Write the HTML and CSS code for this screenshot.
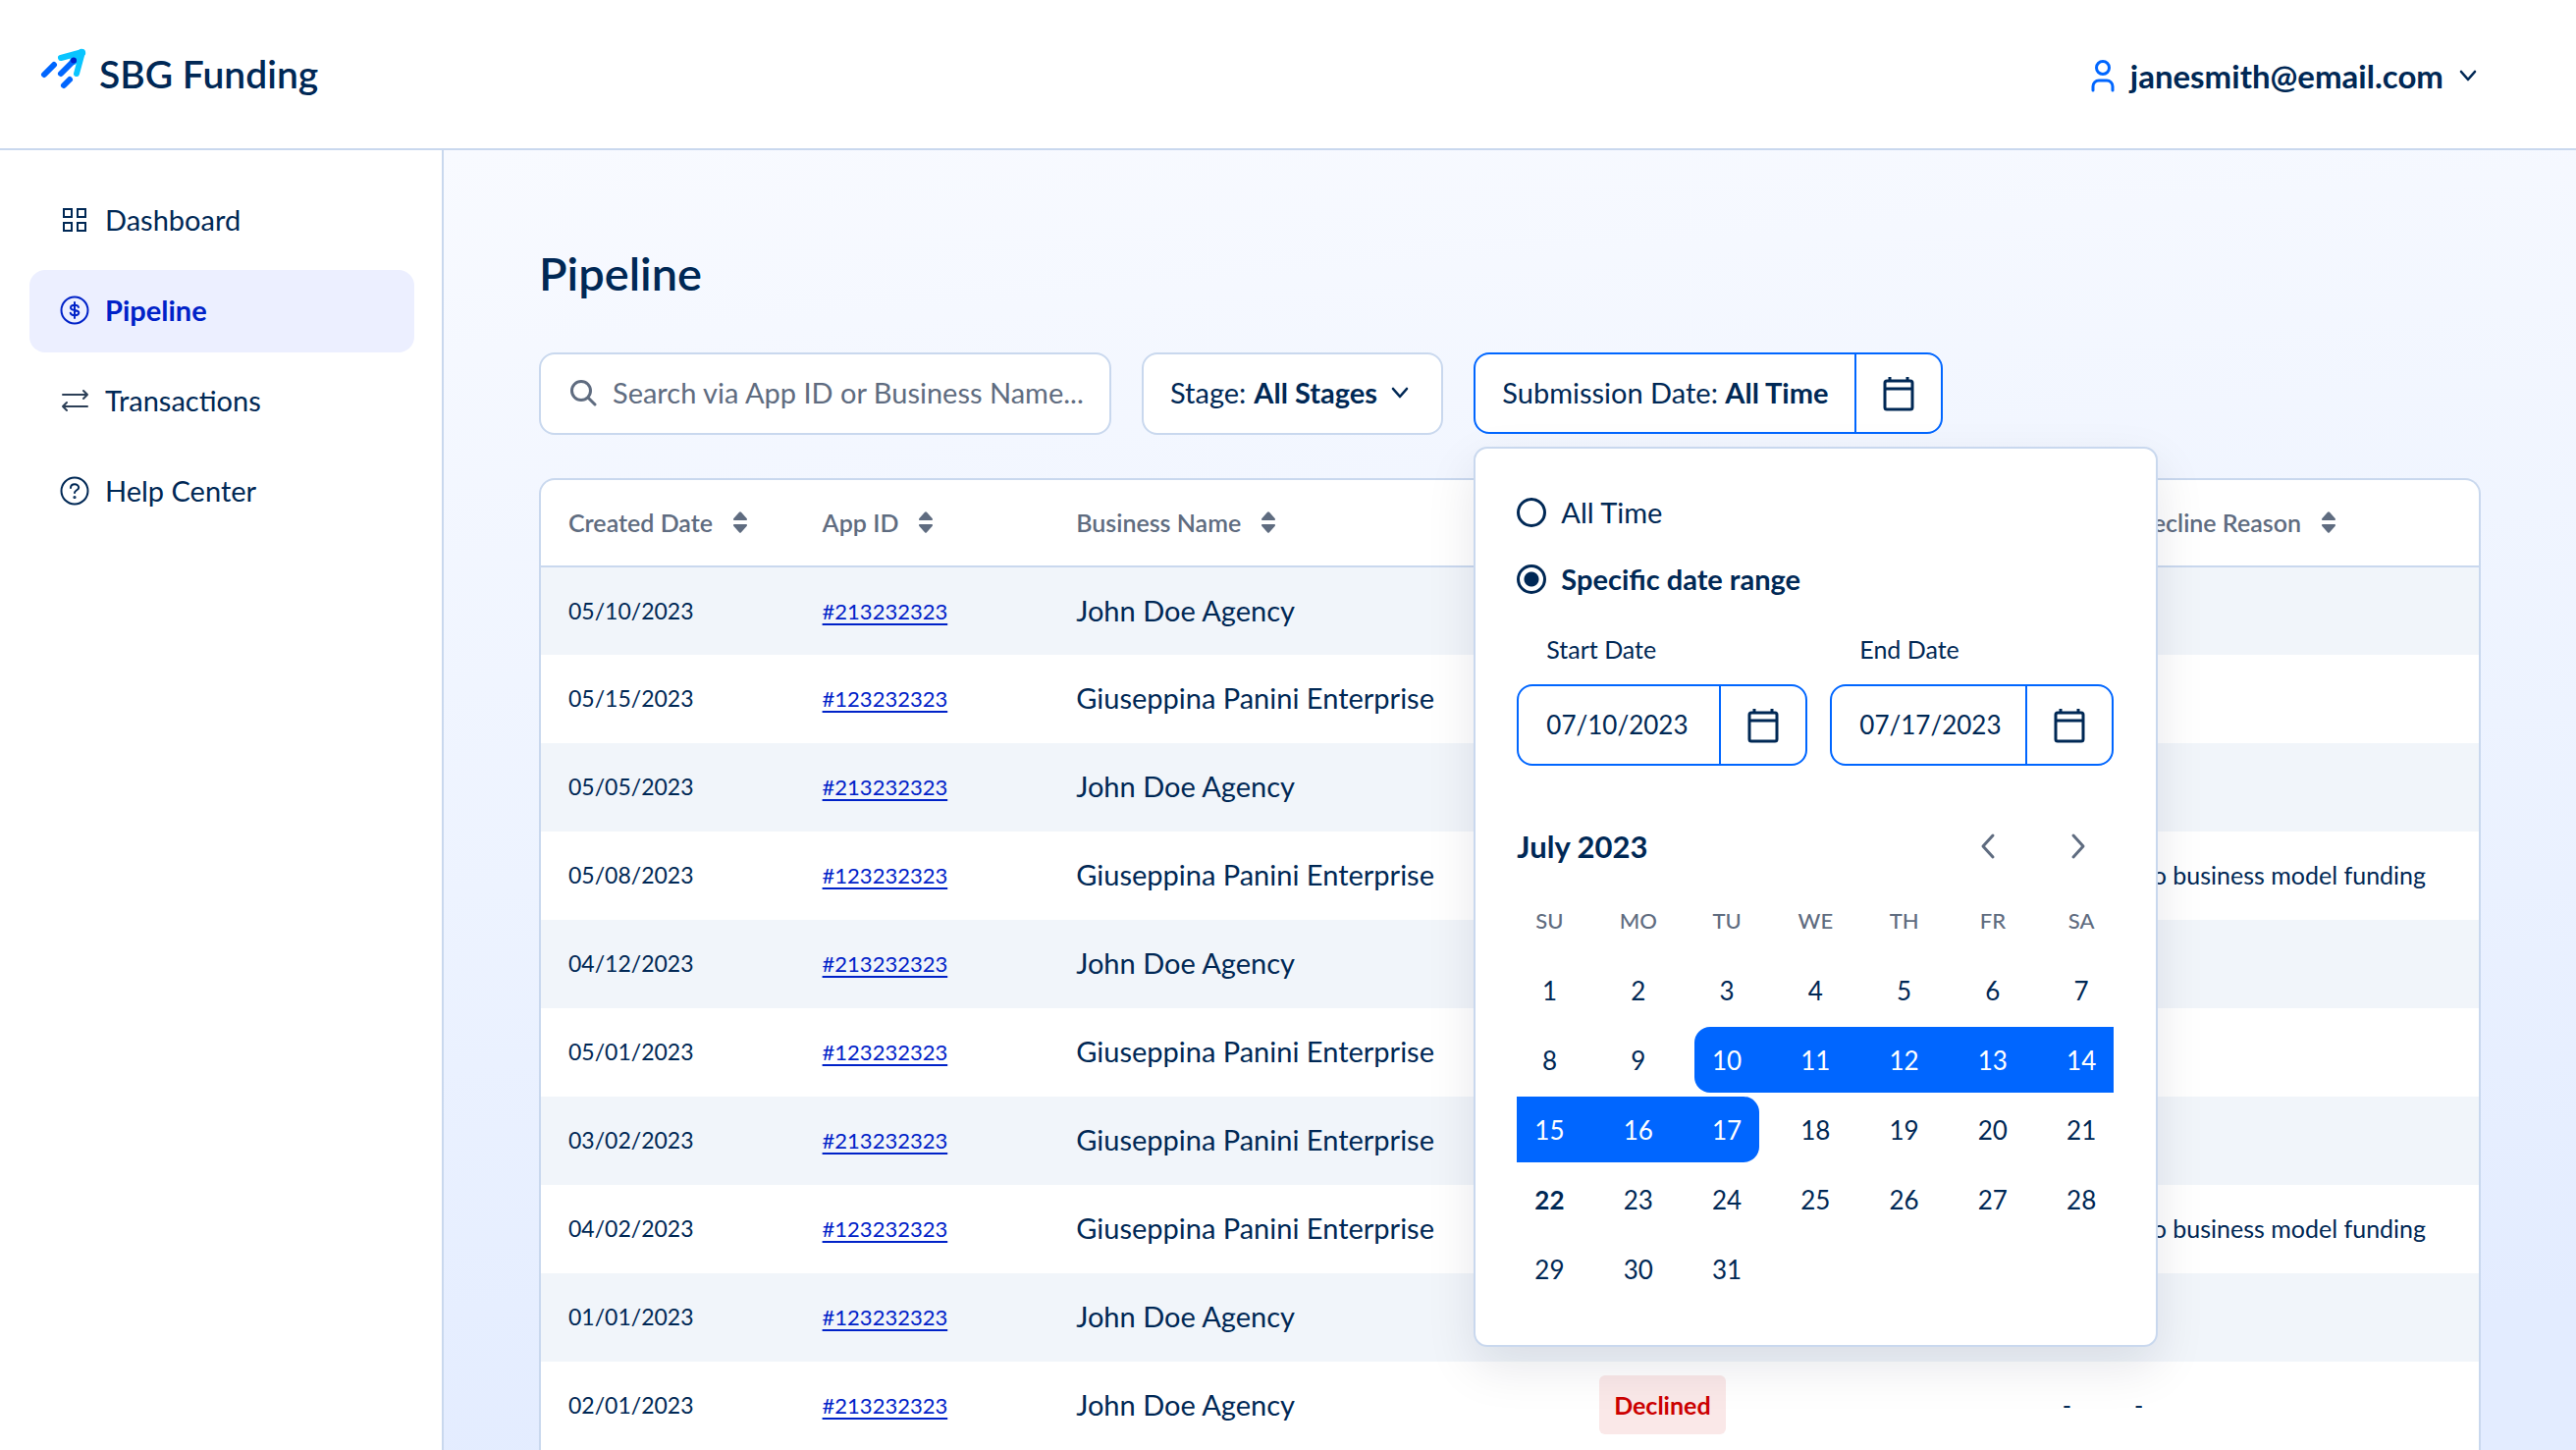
FILE: index.html
```html
<!DOCTYPE html>
<html lang="en">
<head>
  <meta charset="UTF-8">
  <meta name="viewport" content="width=device-width, initial-scale=1.0">
  <title>Pipeline - SBG Funding</title>
  <link rel="stylesheet" href="styles.css">
</head>
<body>

  <!-- Shared icons -->
  <svg class="sprite" aria-hidden="true">
    <symbol id="icon-chevron" viewBox="0 0 18 12">
      <path d="M2 2l7 8 7-8" fill="none" stroke="currentColor" stroke-width="2.600" stroke-linecap="round" stroke-linejoin="round"/>
    </symbol>
    <symbol id="icon-calendar" viewBox="0 0 32 36">
      <path d="M4 5h24a2 2 0 0 1 2 2v25a2 2 0 0 1-2 2H4a2 2 0 0 1-2-2V7a2 2 0 0 1 2-2zM7 1v4M25 1v4M2 13h28" fill="none" stroke="currentColor" stroke-width="3"/>
    </symbol>
    <symbol id="icon-sort" viewBox="0 0 14 22">
      <path d="M6 .7a1.4 1.4 0 0 1 2 0l5.600 6.300c.8 1 .3 2-.8 2H1.200C.1 9-.4 8 .4 7zM6 21.300a1.400 1.400 0 0 0 2 0l5.600-6.300c.8-1 .3-2-.8-2H1.200c-1.100 0-1.600 1-.8 2z" fill="currentColor"/>
    </symbol>
  </svg>

  <div class="app">
    <header class="header">
      <a href="#" class="brand">
        <svg class="brand-logo" width="48" height="44" viewBox="0 0 48 44" fill="none" stroke-linecap="round" stroke-linejoin="round" aria-hidden="true">
          <path d="M21 11l22-6-6 22" stroke="#0ac5ff" stroke-width="6"/>
          <path d="M42 6L34 14" stroke="#0ac5ff" stroke-width="8"/>
          <path d="M21 27L34 14" stroke="#0066ff" stroke-width="6"/>
          <path d="M4 28L14 18" stroke="#0066ff" stroke-width="6"/>
          <path d="M24 39l6-6" stroke="#0066ff" stroke-width="6"/>
          <circle cx="34" cy="13.500" r="3" fill="#0022c8"/>
        </svg>
        <span>SBG Funding</span>
      </a>
      <button type="button" class="user-menu">
        <svg width="24" height="34" viewBox="0 0 24 34" fill="none" stroke="#0066ff" stroke-width="3" stroke-linecap="round" aria-hidden="true">
          <circle cx="12" cy="9" r="6.500"/>
          <path d="M2 32v-4a6 6 0 0 1 6-6h8a6 6 0 0 1 6 6v4"/>
        </svg>
        <span>janesmith@email.com</span>
        <svg class="chevron" aria-hidden="true"><use href="#icon-chevron"/></svg>
      </button>
    </header>

    <nav class="sidebar">
      <a href="#" class="nav-item">
        <svg width="30" height="30" viewBox="0 0 30 30" fill="none" stroke="currentColor" stroke-width="2" aria-hidden="true">
          <path d="M4 4h8v8H4zM18 4h8v8h-8zM4 18h8v8H4zM18 18h8v8h-8z"/>
        </svg>
        <span>Dashboard</span>
      </a>
      <a href="#" class="nav-item active">
        <svg width="30" height="30" viewBox="0 0 30 30" fill="none" stroke="currentColor" stroke-width="2" stroke-linecap="round" aria-hidden="true">
          <circle cx="15" cy="15" r="13.500"/>
          <path d="M15 7v16M19 12c-.4-1.500-2-2.200-4-2.200-2.400 0-4 .9-4 2.600 0 3.600 8.300 1.600 8.300 5.200 0 1.800-1.900 2.700-4.300 2.700-2.200 0-4-.9-4.300-2.600"/>
        </svg>
        <span>Pipeline</span>
      </a>
      <a href="#" class="nav-item">
        <svg class="icon-soft" width="30" height="30" viewBox="0 0 30 30" fill="none" stroke="currentColor" stroke-width="2" stroke-linecap="round" stroke-linejoin="round" aria-hidden="true">
          <path d="M3 9h25M24 5l4 4-4 4M28 21H3M7 17l-4 4 4 4"/>
        </svg>
        <span>Transactions</span>
      </a>
      <a href="#" class="nav-item">
        <svg width="30" height="30" viewBox="0 0 30 30" fill="none" stroke="currentColor" stroke-width="2" stroke-linecap="round" aria-hidden="true">
          <circle cx="15" cy="15" r="13.500"/>
          <path d="M11 12c0-2.300 1.700-3.800 4-3.800s4.200 1.400 4.200 3.500c0 2.600-4.200 2.500-4.200 5.300"/>
          <circle cx="15" cy="21.500" r=".6" fill="currentColor"/>
        </svg>
        <span>Help Center</span>
      </a>
    </nav>

    <main class="main">
      <h1>Pipeline</h1>

      <div class="filters">
        <label class="search">
          <svg width="28" height="28" viewBox="0 0 28 28" fill="none" stroke="currentColor" stroke-width="3" stroke-linecap="round" aria-hidden="true">
            <circle cx="12" cy="12" r="9.500"/>
            <path d="M19 19l7 7"/>
          </svg>
          <input type="text" aria-label="Search" placeholder="Search via App ID or Business Name...">
        </label>

        <div class="stage">
          <label for="stage">Stage:</label>
          <select id="stage">
            <option>All Stages</option>
          </select>
          <svg class="chevron" aria-hidden="true"><use href="#icon-chevron"/></svg>
        </div>

        <div class="date-filter">
          <div class="split">
            <button type="button" class="split-text">Submission Date: <b>All Time</b></button>
            <button type="button" class="split-icon" aria-label="Open calendar"><svg class="calendar" aria-hidden="true"><use href="#icon-calendar"/></svg></button>
          </div>

          <div class="popup">
            <div class="radios">
              <label><input type="radio" name="range"> All Time</label>
              <label><input type="radio" name="range" checked> Specific date range</label>
            </div>

            <div class="dates">
              <div class="date-field">
                <label for="start-date">Start Date</label>
                <div class="split">
                  <input type="text" id="start-date" value="07/10/2023">
                  <button type="button" class="split-icon" aria-label="Pick start date"><svg class="calendar" aria-hidden="true"><use href="#icon-calendar"/></svg></button>
                </div>
              </div>
              <div class="date-field">
                <label for="end-date">End Date</label>
                <div class="split">
                  <input type="text" id="end-date" value="07/17/2023">
                  <button type="button" class="split-icon" aria-label="Pick end date"><svg class="calendar" aria-hidden="true"><use href="#icon-calendar"/></svg></button>
                </div>
              </div>
            </div>

            <div class="month">
              <h2>July 2023</h2>
              <button type="button" aria-label="Previous month">
                <svg width="18" height="30" viewBox="0 0 18 30" fill="none" stroke="currentColor" stroke-width="3" stroke-linecap="round" stroke-linejoin="round"><path d="M14 4L4 15l10 11"/></svg>
              </button>
              <button type="button" aria-label="Next month">
                <svg width="18" height="30" viewBox="0 0 18 30" fill="none" stroke="currentColor" stroke-width="3" stroke-linecap="round" stroke-linejoin="round"><path d="M4 4l10 11L4 26"/></svg>
              </button>
            </div>

            <div class="weekdays">
              <span>SU</span><span>MO</span><span>TU</span><span>WE</span><span>TH</span><span>FR</span><span>SA</span>
            </div>
            <div class="days">
              <button type="button">1</button>
              <button type="button">2</button>
              <button type="button">3</button>
              <button type="button">4</button>
              <button type="button">5</button>
              <button type="button">6</button>
              <button type="button">7</button>
              <button type="button">8</button>
              <button type="button">9</button>
              <button type="button" class="in-range range-start">10</button>
              <button type="button" class="in-range">11</button>
              <button type="button" class="in-range">12</button>
              <button type="button" class="in-range">13</button>
              <button type="button" class="in-range">14</button>
              <button type="button" class="in-range">15</button>
              <button type="button" class="in-range">16</button>
              <button type="button" class="in-range range-end">17</button>
              <button type="button">18</button>
              <button type="button">19</button>
              <button type="button">20</button>
              <button type="button">21</button>
              <button type="button" class="today">22</button>
              <button type="button">23</button>
              <button type="button">24</button>
              <button type="button">25</button>
              <button type="button">26</button>
              <button type="button">27</button>
              <button type="button">28</button>
              <button type="button">29</button>
              <button type="button">30</button>
              <button type="button">31</button>
            </div>
          </div>
        </div>
      </div>

      <div class="table-card">
        <table>
          <thead>
            <tr>
              <th class="col-date"><button type="button">Created Date <svg class="sort"><use href="#icon-sort"/></svg></button></th>
              <th class="col-id"><button type="button">App ID <svg class="sort"><use href="#icon-sort"/></svg></button></th>
              <th class="col-name"><button type="button">Business Name <svg class="sort"><use href="#icon-sort"/></svg></button></th>
              <th class="col-stage"></th>
              <th class="col-amount"></th>
              <th><button type="button">Decline Reason <svg class="sort"><use href="#icon-sort"/></svg></button></th>
            </tr>
          </thead>
          <tbody>
            <tr><td class="date">05/10/2023</td><td><a href="#">#213232323</a></td><td class="name">John Doe Agency</td><td></td><td></td><td></td></tr>
            <tr><td class="date">05/15/2023</td><td><a href="#">#123232323</a></td><td class="name">Giuseppina Panini Enterprise</td><td></td><td></td><td></td></tr>
            <tr><td class="date">05/05/2023</td><td><a href="#">#213232323</a></td><td class="name">John Doe Agency</td><td></td><td></td><td></td></tr>
            <tr><td class="date">05/08/2023</td><td><a href="#">#123232323</a></td><td class="name">Giuseppina Panini Enterprise</td><td></td><td></td><td>No business model funding</td></tr>
            <tr><td class="date">04/12/2023</td><td><a href="#">#213232323</a></td><td class="name">John Doe Agency</td><td></td><td></td><td></td></tr>
            <tr><td class="date">05/01/2023</td><td><a href="#">#123232323</a></td><td class="name">Giuseppina Panini Enterprise</td><td></td><td></td><td></td></tr>
            <tr><td class="date">03/02/2023</td><td><a href="#">#213232323</a></td><td class="name">Giuseppina Panini Enterprise</td><td></td><td></td><td></td></tr>
            <tr><td class="date">04/02/2023</td><td><a href="#">#123232323</a></td><td class="name">Giuseppina Panini Enterprise</td><td></td><td></td><td>No business model funding</td></tr>
            <tr><td class="date">01/01/2023</td><td><a href="#">#123232323</a></td><td class="name">John Doe Agency</td><td></td><td></td><td></td></tr>
            <tr><td class="date">02/01/2023</td><td><a href="#">#213232323</a></td><td class="name">John Doe Agency</td><td><span class="badge">Declined</span></td><td class="amount">-</td><td>-</td></tr>
          </tbody>
        </table>
      </div>
    </main>
  </div>

</body>
</html>
```
FILE: styles.css
```css
:root {
  --navy: #002855;
  --blue: #0066ff;
  --link: #0022c8;
  --gray: #5f6c80;
  --line: #c9d8ee;
}

* {
  margin: 0;
  padding: 0;
  box-sizing: border-box;
}

body {
  font-family: Lato, sans-serif;
  font-size: 29px;
  line-height: 36px;
  color: var(--navy);
  background-color: #fff;
}

button,
input,
select {
  font: inherit;
  color: inherit;
  background: none;
  border: none;
  outline: none;
}

button {
  cursor: pointer;
}

a {
  color: inherit;
  text-decoration: none;
}

svg {
  display: block;
  flex-shrink: 0;
}

.sprite {
  display: none;
}

.chevron {
  width: 18px;
  height: 12px;
}

.calendar {
  width: 32px;
  height: 36px;
}

/* Page shell */
.app {
  display: grid;
  grid-template-columns: 452px 1fr;
  grid-template-rows: auto 1fr;
  height: 100vh;
  overflow: hidden;
}

/* Header */
.header {
  grid-column: 1 / -1;
  display: flex;
  justify-content: space-between;
  align-items: center;
  height: 153px;
  padding: 0 101px 0 41px;
  border-bottom: 2px solid var(--line);
}

.brand {
  display: flex;
  align-items: center;
  gap: 12px;
  padding-bottom: 2px;
  font-size: 39px;
  font-weight: 600;
}

.brand-logo {
  margin-bottom: 10px;
}

.user-menu {
  display: flex;
  align-items: center;
  gap: 16px;
  padding-top: 2px;
  font-size: 33px;
  font-weight: 700;
}

/* Sidebar */
.sidebar {
  display: flex;
  flex-direction: column;
  gap: 8px;
  padding: 30px 28px 30px 30px;
  border-right: 2px solid var(--line);
}

.nav-item {
  display: flex;
  align-items: center;
  gap: 16px;
  padding: 23px 31px 25px;
  border-radius: 16px;
}

.nav-item.active {
  color: var(--link);
  font-weight: 700;
  background-color: #ecefff;
}

.icon-soft {
  color: #2c3f57;
}

/* Main */
.main {
  padding: 95px 97px 0;
  background: linear-gradient(175deg, #f8faff 0%, #edf3ff 50%, #e3ecff 90%);
}

h1 {
  font-size: 47px;
  line-height: 60px;
  font-weight: 600;
}

.filters {
  display: flex;
  gap: 31px;
  margin: 51px 0 44px;
}

.search,
.stage {
  display: flex;
  align-items: center;
  height: 84px;
  padding-bottom: 2px;
  background-color: #fff;
  border: 2px solid var(--line);
  border-radius: 16px;
}

.search {
  gap: 16px;
  width: 583px;
  padding-left: 29px;
  padding-right: 20px;
  color: var(--gray);
}

.search input {
  flex: 1;
  min-width: 0;
}

.search input::placeholder {
  color: var(--gray);
  opacity: 1;
}

.stage {
  gap: 8px;
  padding-left: 27px;
  padding-right: 33px;
}

.stage select {
  appearance: none;
  font-weight: 700;
}

.stage .chevron {
  margin-left: 6px;
}

.date-filter {
  position: relative;
}

.split {
  display: flex;
  height: 83px;
  background-color: #fff;
  border: 2px solid var(--blue);
  border-radius: 16px;
}

.split-text {
  padding: 0 27px 2px;
}

.split-text b {
  font-weight: 700;
}

.split-icon {
  display: flex;
  align-items: center;
  justify-content: center;
  width: 88px;
  border-left: 2px solid var(--blue);
}

/* Date popup */
.popup {
  position: absolute;
  top: 96px;
  left: 0;
  z-index: 1;
  width: 697px;
  padding: 47px 43px 44px 42px;
  background-color: #fff;
  border: 2px solid var(--line);
  border-radius: 14px;
  box-shadow: 0 20px 50px rgba(0, 20, 50, 0.1);
}

.radios {
  display: flex;
  flex-direction: column;
  gap: 32px;
}

.radios label {
  display: flex;
  align-items: center;
  gap: 15px;
}

.radios label:has(:checked) {
  font-weight: 700;
}

.radios input {
  appearance: none;
  width: 30px;
  height: 30px;
  border: 3px solid var(--navy);
  border-radius: 50%;
}

.radios input:checked {
  background: radial-gradient(circle, var(--navy) 7px, transparent 8px);
}

.dates {
  display: grid;
  grid-template-columns: 296px 1fr;
  gap: 23px;
  margin-top: 35px;
}

.date-field {
  display: flex;
  flex-direction: column;
  gap: 18px;
  min-width: 0;
}

.date-field label {
  padding-left: 30px;
  font-size: 25px;
}

.date-field input {
  flex: 1;
  min-width: 0;
  padding: 0 0 2px 28px;
  font-size: 26px;
}

.month {
  display: flex;
  align-items: center;
  gap: 32px;
  margin: 52px 6px 36px 0;
}

.month h2 {
  flex: 1;
  font-size: 31px;
  line-height: 60px;
  font-weight: 700;
}

.month button {
  display: flex;
  align-items: center;
  justify-content: center;
  width: 60px;
  height: 60px;
  color: var(--gray);
}

.weekdays,
.days {
  display: grid;
  grid-template-columns: repeat(7, 1fr);
  column-gap: 24px;
  text-align: center;
}

.weekdays {
  margin-bottom: 27px;
  font-size: 22px;
  line-height: 20px;
  font-weight: 500;
  color: var(--gray);
}

.days {
  row-gap: 4px;
  font-size: 26px;
}

.days button {
  height: 67px;
}

.today {
  font-weight: 700;
}

.days .in-range {
  color: #fff;
  background-color: var(--blue);
}

/* fill the gap up to the next day of the range */
.days .in-range:not(.range-end):not(:nth-child(7n)) {
  box-shadow: 24px 0 0 var(--blue);
}

.range-start {
  border-radius: 16px 0 0 16px;
}

.range-end {
  border-radius: 0 16px 16px 0;
}

/* Table */
.table-card {
  background-color: #fff;
  border: 2px solid var(--line);
  border-bottom: none;
  border-radius: 16px 16px 0 0;
}

table {
  width: 100%;
  table-layout: fixed;
  border-collapse: collapse;
}

th,
td {
  padding: 0 0 2px 28px;
  text-align: left;
  white-space: nowrap;
  font-size: 25px;
}

th {
  height: 88px;
  border-bottom: 2px solid var(--line);
  color: var(--gray);
}

th button {
  display: flex;
  align-items: center;
  gap: 21px;
  font-weight: 600;
}

td {
  height: 90px;
}

tbody tr:nth-child(odd) {
  background-color: #f1f5fa;
}

td a {
  font-size: 22px;
  color: var(--link);
  text-decoration: underline;
  text-underline-offset: 4px;
}

.date {
  font-size: 23px;
}

.name {
  font-size: 29px;
}

.col-date,
.col-id {
  width: 13.1%;
}

.col-name {
  width: 27%;
}

.col-stage {
  width: 14%;
}

.col-amount {
  width: 13.6%;
}

.amount {
  padding-right: 36px;
  text-align: right;
}

.sort {
  width: 14px;
  height: 22px;
}

.badge {
  display: inline-block;
  padding: 12px 15px;
  font-weight: 700;
  color: #cc0000;
  background-color: #fae8e8;
  border-radius: 6px;
}
```
